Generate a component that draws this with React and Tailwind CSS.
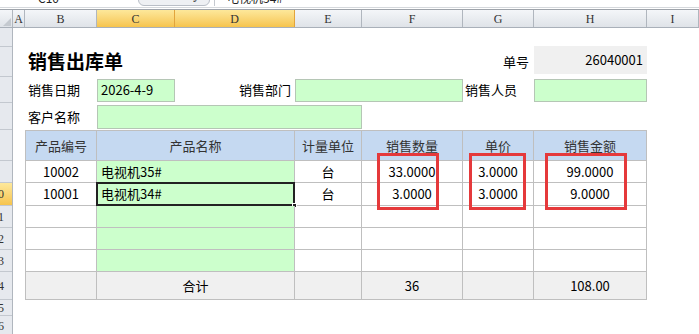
import React from "react";

const font = { fontFamily: '"Noto Sans CJK SC", "Liberation Sans", sans-serif' };

// column widths of the visible sheet: A B C D E F G H I
const cols = [
  { k: "A", w: "w-[12px]" },
  { k: "B", w: "w-[72px]" },
  { k: "C", w: "w-[78px]", on: true },
  { k: "D", w: "w-[120px]", on: true },
  { k: "E", w: "w-[67px]" },
  { k: "F", w: "w-[101px]" },
  { k: "G", w: "w-[71px]" },
  { k: "H", w: "w-[113px]" },
  { k: "I", w: "flex-1" },
];

// row header cells (height, label)
const rowHeads = [
  { h: "h-[19px]", n: "1" },
  { h: "h-[30px]", n: "2" },
  { h: "h-[26px]", n: "3" },
  { h: "h-[27px]", n: "4" },
  { h: "h-[31px]", n: "8" },
  { h: "h-[22px]", n: "9" },
  { h: "h-[23px]", n: "10", on: true },
  { h: "h-[22px]", n: "11" },
  { h: "h-[22px]", n: "12" },
  { h: "h-[22px]", n: "13" },
  { h: "h-[28px]", n: "14" },
  { h: "h-[16px]", n: "15" },
  { h: "h-[20px]", n: "16" },
];

const cell = "border-r border-b border-[#bfbfbf] flex items-center text-[13px]";

const Row = ({ code, name, qty, price, amount, selected }) => (
  <>
    <div className={`${cell} border-l justify-center`}>{code}</div>
    <div className={`${cell} col-span-2 bg-[#ccffcc] pl-[4px] relative`}>
      {name}
      {selected && (
        <>
          <div className="absolute inset-[-1px] border-2 border-[#222]" />
          <div className="absolute right-[-3px] bottom-[-3px] w-[5px] h-[5px] bg-[#222] border border-white" />
        </>
      )}
    </div>
    <div className={`${cell} justify-center`}>{name ? "台" : ""}</div>
    <div className={`${cell} justify-center`}>{qty}</div>
    <div className={`${cell} justify-center`}>{price}</div>
    <div className={`${cell} justify-center`}>{amount}</div>
  </>
);

export default function App() {
  return (
    <div className="w-[699px] h-[334px] overflow-hidden bg-white text-black relative" style={font}>
      {/* formula bar, only its bottom edge is in view */}
      <div className="h-[10px] relative overflow-hidden border-b border-[#9ea3aa] bg-white">
        <div className="absolute top-[-11px] left-0 right-0 h-[17px] flex items-center text-[12px] text-[#222]">
          <span className="ml-[38px] w-[60px]">C10</span>
          <div className="ml-[40px] w-[72px] h-[17px] rounded-[6px] border border-[#b9bec6] bg-[#eef0f3] flex items-center justify-end pr-[6px] text-[11px] italic font-serif">
            fx
          </div>
          <div className="w-px h-[17px] bg-[#c5c9cf] ml-[4px]" />
          <span className="ml-[12px]">电视机34#</span>
        </div>
        <div className="absolute left-0 right-0 bottom-[1px] h-px bg-[#d5d8dc]" />
      </div>

      {/* column headers */}
      <div
        className="flex h-[18px] bg-gradient-to-b from-[#f4f6f9] to-[#dfe3e8] border-b border-[#a9b0b9] text-[12px] text-[#333]"
        style={{ fontFamily: '"Liberation Serif", "DejaVu Serif", serif' }}
      >
        <div className="w-[13px] border-r border-[#b0b6be] flex items-end justify-end">
          <div className="w-0 h-0 border-l-[8px] border-l-transparent border-b-[8px] border-b-[#c4c9cf] mr-[1px] mb-[1px]" />
        </div>
        {cols.map((c) => (
          <div
            key={c.k}
            className={`${c.w} flex items-center justify-center border-r border-[#b0b6be] ${
              c.on ? "bg-gradient-to-b from-[#fde89a] to-[#f6c44c] border-[#e2a43c]" : ""
            }`}
          >
            {c.k}
          </div>
        ))}
      </div>

      <div className="flex">
        {/* row headers, cut off on the left */}
        <div className="w-[13px] shrink-0 flex flex-col border-r border-[#b0b6be] bg-[#e6e9ee] text-[12px] text-[#333]" style={{ fontFamily: '"Liberation Serif", serif' }}>
          {rowHeads.map((r) => (
            <div
              key={r.n}
              className={`${r.h} overflow-hidden flex items-center justify-end pr-[8px] border-b border-[#c3c8cf] ${
                r.on ? "bg-gradient-to-b from-[#fde89a] to-[#f6c44c]" : ""
              }`}
            >
              <span className={`shrink-0 ${r.n.length > 1 ? "" : "opacity-0"}`}>{r.n}</span>
            </div>
          ))}
        </div>

        {/* sheet */}
        <div className="relative flex-1">
          <div className="grid grid-cols-[12px_72px_78px_120px_67px_101px_71px_113px_1fr] grid-rows-[19px_30px_26px_27px_31px_22px_23px_22px_22px_22px_28px]">
            {/* row 1 empty */}
            <div className="col-span-9" />

            {/* row 2: title + 单号 */}
            <div />
            <div className="col-span-3 flex items-end pb-[7px] pl-[3px] text-[19px] font-bold leading-none">销售出库单</div>
            <div />
            <div />
            <div className="flex items-center justify-end pr-[5px] text-[13px]">单号</div>
            <div className="bg-[#f0f0f0] h-[28px] -mt-[1px] flex items-center justify-end pr-[4px] text-[13px]">26040001</div>
            <div />

            {/* row 3: date, dept, person */}
            <div />
            <div className="flex items-center pl-[3px] text-[13px]">销售日期</div>
            <div className="h-[23px] self-center border border-[#b5c6b5] bg-[#ccffcc] flex items-center pl-[3px] text-[13px]">2026-4-9</div>
            <div className="flex items-center justify-end pr-[4px] text-[13px]">销售部门</div>
            <div className="col-span-2 h-[23px] self-center border border-[#b5c6b5] bg-[#ccffcc]" />
            <div className="flex items-center pl-[2px] text-[13px]">销售人员</div>
            <div className="h-[23px] self-center border border-[#b5c6b5] bg-[#ccffcc]" />
            <div />

            {/* row 4: customer */}
            <div />
            <div className="flex items-center pl-[3px] text-[13px]">客户名称</div>
            <div className="col-span-3 h-[24px] self-center border border-[#b5c6b5] bg-[#ccffcc]" />
            <div className="col-span-4" />

            {/* table header */}
            <div />
            {["产品编号", "产品名称", "计量单位", "销售数量", "单价", "销售金额"].map((t, i) => (
              <div
                key={t}
                className={`${cell} border-t bg-[#c5d9f1] justify-center text-[#333] ${i === 0 ? "border-l" : ""} ${
                  i === 1 ? "col-span-2" : ""
                }`}
              >
                {t}
              </div>
            ))}
            <div />

            <div />
            <Row code="10002" name="电视机35#" qty="33.0000" price="3.0000" amount="99.0000" />
            <div />
            <div />
            <Row code="10001" name="电视机34#" qty="3.0000" price="3.0000" amount="9.0000" selected />
            <div />
            {[0, 1, 2].map((i) => (
              <React.Fragment key={i}>
                <div />
                <Row />
                <div />
              </React.Fragment>
            ))}

            {/* total row */}
            <div />
            <div className={`${cell} border-l bg-[#f0f0f0]`} />
            <div className={`${cell} col-span-2 bg-[#f0f0f0] justify-center`}>合计</div>
            <div className={`${cell} bg-[#f0f0f0]`} />
            <div className={`${cell} bg-[#f0f0f0] justify-center`}>36</div>
            <div className={`${cell} bg-[#f0f0f0]`} />
            <div className={`${cell} bg-[#f0f0f0] justify-center`}>108.00</div>
            <div />
          </div>

          {/* red highlight boxes drawn over the values */}
          <div className="absolute left-[364px] top-[125px] w-[62px] h-[57px] border-[3px] border-[#e5393b]" />
          <div className="absolute left-[456px] top-[125px] w-[57px] h-[57px] border-[3px] border-[#e5393b]" />
          <div className="absolute left-[532px] top-[125px] w-[82px] h-[57px] border-[3px] border-[#e5393b]" />
        </div>
      </div>
    </div>
  );
}
